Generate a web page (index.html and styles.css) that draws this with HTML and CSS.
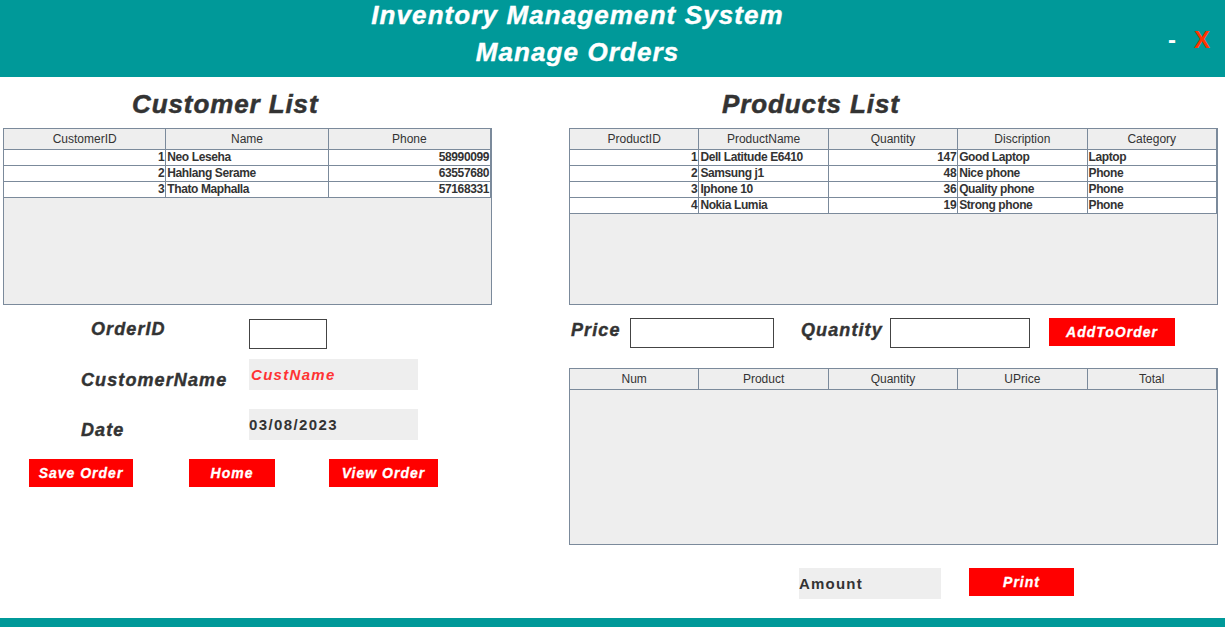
FILE: index.html
```html
<!DOCTYPE html>
<html lang="en">
<head>
<meta charset="utf-8">
<title>Manage Orders</title>
<link rel="stylesheet" href="styles.css">
</head>
<body>
<header class="topbar">
  <div class="titles">
    <h1>Inventory Management System</h1>
    <h2>Manage Orders</h2>
  </div>
  <div class="winctl"><span class="min">-</span><span class="close">X</span></div>
</header>
<main class="content">
  <section class="left">
    <h3 class="list-title cust-title">Customer List</h3>
    <div class="table-box">
      <table>
        <thead><tr><th>CustomerID</th><th>Name</th><th>Phone</th></tr></thead>
        <tbody>
          <tr><td class="num">1</td><td>Neo Leseha</td><td class="num">58990099</td></tr>
          <tr><td class="num">2</td><td>Hahlang Serame</td><td class="num">63557680</td></tr>
          <tr><td class="num">3</td><td>Thato Maphalla</td><td class="num">57168331</td></tr>
        </tbody>
      </table>
    </div>
    <div class="order-form">
      <div class="form-row r1">
        <span class="form-label id-label">OrderID</span>
        <span class="input id-input"></span>
      </div>
      <div class="form-row r2">
        <span class="form-label">CustomerName</span>
        <span class="field cust-name">CustName</span>
      </div>
      <div class="form-row r3">
        <span class="form-label">Date</span>
        <span class="field date-val">03/08/2023</span>
      </div>
    </div>
    <div class="btn-row">
      <button class="btn save">Save Order</button>
      <button class="btn home">Home</button>
      <button class="btn view">View Order</button>
    </div>
  </section>
  <section class="right">
    <h3 class="list-title prod-title">Products List</h3>
    <div class="table-box">
      <table>
        <thead><tr><th>ProductID</th><th>ProductName</th><th>Quantity</th><th>Discription</th><th>Category</th></tr></thead>
        <tbody>
          <tr><td class="num">1</td><td>Dell Latitude E6410</td><td class="num">147</td><td>Good Laptop</td><td>Laptop</td></tr>
          <tr><td class="num">2</td><td>Samsung j1</td><td class="num">48</td><td>Nice phone</td><td>Phone</td></tr>
          <tr><td class="num">3</td><td>Iphone 10</td><td class="num">36</td><td>Quality phone</td><td>Phone</td></tr>
          <tr><td class="num">4</td><td>Nokia Lumia</td><td class="num">19</td><td>Strong phone</td><td>Phone</td></tr>
        </tbody>
      </table>
    </div>
    <div class="add-row">
      <span class="form-label price-label">Price</span>
      <span class="input price-input"></span>
      <span class="form-label qty-label">Quantity</span>
      <span class="input qty-input"></span>
      <button class="btn add">AddToOrder</button>
    </div>
    <div class="table-box order-box">
      <table>
        <thead><tr><th>Num</th><th>Product</th><th>Quantity</th><th>UPrice</th><th>Total</th></tr></thead>
        <tbody></tbody>
      </table>
    </div>
    <div class="amount-row">
      <span class="field amount">Amount</span>
      <button class="btn print">Print</button>
    </div>
  </section>
</main>
<footer class="bottombar"></footer>
</body>
</html>
```

FILE: styles.css
```css
* { box-sizing: border-box; }

body {
  margin: 0;
  width: 1225px;
  height: 627px;
  display: flex;
  flex-direction: column;
  overflow: hidden;
  background: #fff;
  font-family: "Liberation Sans", Arial, sans-serif;
  color: #333;
}

.topbar {
  height: 77px;
  flex-shrink: 0;
  background: #009999;
  display: flex;
}

.titles {
  flex: 1;
  text-align: center;
  color: #fff;
  font-size: 26px;
  line-height: 37px;
  font-weight: bold;
  font-style: italic;
  letter-spacing: 1.1px;
  margin-top: -3px;
  -webkit-text-stroke: 0.4px #fff;
}

.titles h1,
.titles h2 {
  margin: 0;
  font-size: inherit;
  font-weight: inherit;
}

.winctl {
  width: 70px;
  display: flex;
  align-items: center;
  padding-top: 2px;
  font-size: 24px;
  line-height: 24px;
  font-weight: bold;
}

.min { color: #fff; margin-left: 13px; }
.close { color: #ff3300; margin-left: 18px; }

.content {
  flex: 1;
  display: flex;
  gap: 77px;
  padding-left: 3px;
}

.left { width: 489px; }
.right { width: 649px; }

.list-title {
  margin: 12px 0 9px;
  font-size: 26px;
  line-height: 30px;
  font-weight: bold;
  font-style: italic;
  letter-spacing: 0.9px;
  color: #333;
  -webkit-text-stroke: 0.5px #333;
}

.cust-title { padding-left: 129px; }
.prod-title { padding-left: 153px; }

.table-box {
  height: 177px;
  border: 1px solid #7b8a9b;
  background: #eeeeee;
}

table {
  width: 100%;
  border-spacing: 0;
  table-layout: fixed;
  background: #fff;
}

th {
  background: #eeeeee;
  font-weight: normal;
  font-size: 12px;
  line-height: 20px;
  color: #333;
  padding: 0;
  border-right: 1px solid #7b8a9b;
  border-bottom: 1px solid #7b8a9b;
}

td {
  font-size: 12px;
  line-height: 15px;
  font-weight: bold;
  color: #333;
  padding: 0 1px;
  letter-spacing: -0.4px;
  white-space: nowrap;
  overflow: hidden;
  border-right: 1px solid #7b8a9b;
  border-bottom: 1px solid #7b8a9b;
}

td.num { text-align: right; }

.order-form {
  margin-top: 14px;
  padding-left: 78px;
  display: flex;
  flex-direction: column;
}

.form-row {
  display: flex;
  align-items: flex-start;
}

.form-label {
  font-size: 18px;
  line-height: 20px;
  font-weight: bold;
  font-style: italic;
  letter-spacing: 1.1px;
  color: #333;
  -webkit-text-stroke: 0.4px #333;
}

.order-form .form-label { width: 168px; }
.id-label { padding-left: 10px; }
.r2 { margin-top: 10px; }
.r3 { margin-top: 19px; }
.r2 .form-label, .r3 .form-label { margin-top: 11px; }

.input {
  display: block;
  height: 30px;
  border: 1px solid #444;
  background: #fff;
}

.id-input { width: 78px; }

.field {
  display: block;
  height: 31px;
  background: #eeeeee;
  font-size: 15px;
  line-height: 31px;
  font-weight: bold;
}

.cust-name {
  width: 169px;
  padding-left: 2px;
  color: #ff3333;
  font-style: italic;
  letter-spacing: 1.3px;
}

.date-val {
  width: 169px;
  color: #333;
  letter-spacing: 1.4px;
}

.btn {
  display: block;
  height: 28px;
  padding: 0;
  border: none;
  background: #ff0000;
  color: #fff;
  font-family: "Liberation Sans", Arial, sans-serif;
  font-size: 14px;
  font-weight: bold;
  font-style: italic;
  letter-spacing: 1px;
  -webkit-text-stroke: 0.3px #fff;
}

.btn-row {
  display: flex;
  margin-top: 19px;
  padding-left: 26px;
}

.save { width: 104px; }
.home { width: 86px; margin-left: 56px; }
.view { width: 109px; margin-left: 54px; }

.add-row {
  margin-top: 13px;
  display: flex;
  align-items: flex-start;
}

.price-label { width: 61px; padding-left: 2px; margin-top: 2px; }
.price-input { width: 144px; }
.qty-label { width: 89px; margin-left: 27px; margin-top: 2px; }
.qty-input { width: 140px; }
.add { width: 126px; margin-left: 19px; }

.order-box { margin-top: 20px; }

.amount-row {
  margin-top: 23px;
  padding-left: 230px;
  display: flex;
  align-items: flex-start;
}

.amount {
  width: 142px;
  color: #333;
  letter-spacing: 1.2px;
}

.print { width: 105px; margin-left: 28px; }

.bottombar {
  height: 9px;
  flex-shrink: 0;
  background: #009999;
}
```
